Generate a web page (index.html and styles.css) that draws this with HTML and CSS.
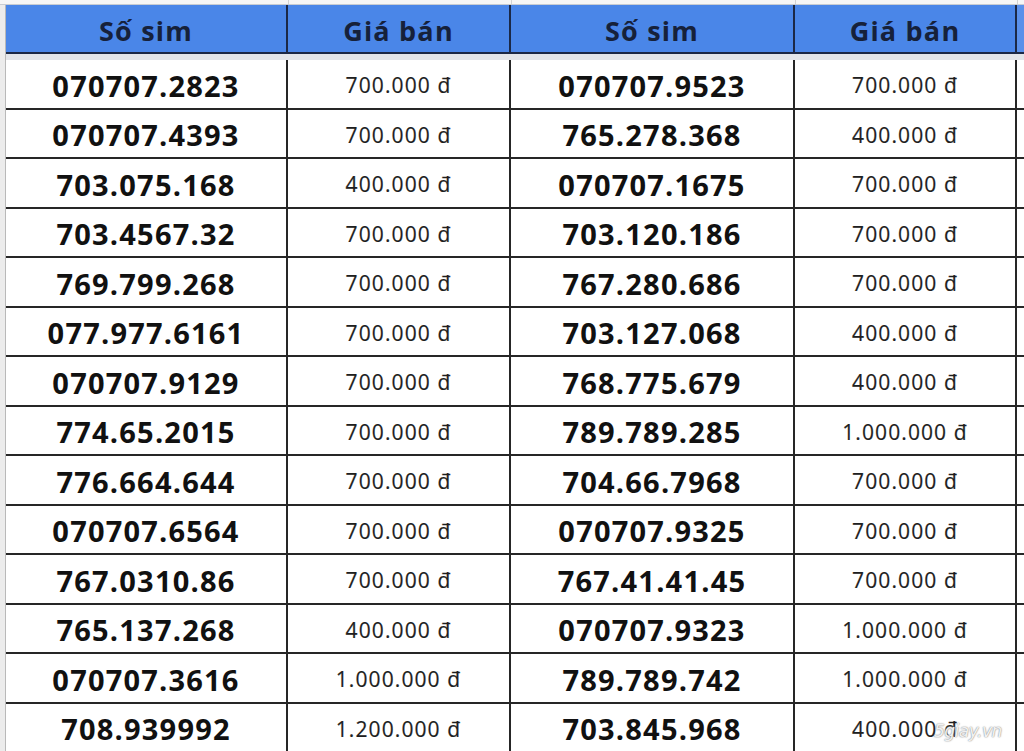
FILE: index.html
```html
<!DOCTYPE html>
<html lang="vi">
<head>
<meta charset="utf-8">
<title>Bảng giá sim</title>
<link rel="stylesheet" href="styles.css">
</head>
<body>
<div class="page">
  <div class="topbar">
    <div class="tcell tc1"></div><div class="tcell tc2"></div><div class="tcell tc3"></div><div class="tcell tc4"></div><div class="tcell tc5"></div>
  </div>
  <div class="main">
    <div class="gutter"></div>
    <div class="sheet">
      <div class="head">
        <div class="hcell">Số sim</div>
        <div class="hcell">Giá bán</div>
        <div class="hcell">Số sim</div>
        <div class="hcell">Giá bán</div>
        <div class="hcell last"></div>
      </div>
      <div class="band"></div>
      <div class="body">
        <div class="num">070707.2823</div><div class="price">700.000 đ</div><div class="num">070707.9523</div><div class="price">700.000 đ</div><div class="extra"></div>
        <div class="num">070707.4393</div><div class="price">700.000 đ</div><div class="num">765.278.368</div><div class="price">400.000 đ</div><div class="extra"></div>
        <div class="num">703.075.168</div><div class="price">400.000 đ</div><div class="num">070707.1675</div><div class="price">700.000 đ</div><div class="extra"></div>
        <div class="num">703.4567.32</div><div class="price">700.000 đ</div><div class="num">703.120.186</div><div class="price">700.000 đ</div><div class="extra"></div>
        <div class="num">769.799.268</div><div class="price">700.000 đ</div><div class="num">767.280.686</div><div class="price">700.000 đ</div><div class="extra"></div>
        <div class="num">077.977.6161</div><div class="price">700.000 đ</div><div class="num">703.127.068</div><div class="price">400.000 đ</div><div class="extra"></div>
        <div class="num">070707.9129</div><div class="price">700.000 đ</div><div class="num">768.775.679</div><div class="price">400.000 đ</div><div class="extra"></div>
        <div class="num">774.65.2015</div><div class="price">700.000 đ</div><div class="num">789.789.285</div><div class="price">1.000.000 đ</div><div class="extra"></div>
        <div class="num">776.664.644</div><div class="price">700.000 đ</div><div class="num">704.66.7968</div><div class="price">700.000 đ</div><div class="extra"></div>
        <div class="num">070707.6564</div><div class="price">700.000 đ</div><div class="num">070707.9325</div><div class="price">700.000 đ</div><div class="extra"></div>
        <div class="num">767.0310.86</div><div class="price">700.000 đ</div><div class="num">767.41.41.45</div><div class="price">700.000 đ</div><div class="extra"></div>
        <div class="num">765.137.268</div><div class="price">400.000 đ</div><div class="num">070707.9323</div><div class="price">1.000.000 đ</div><div class="extra"></div>
        <div class="num">070707.3616</div><div class="price">1.000.000 đ</div><div class="num">789.789.742</div><div class="price">1.000.000 đ</div><div class="extra"></div>
        <div class="num">708.939992</div><div class="price">1.200.000 đ</div><div class="num">703.845.968</div><div class="price">400.000 đ</div><div class="extra"></div>
      </div>
    </div>
  </div>
  <div class="watermark">5giay.vn</div>
</div>
</body>
</html>
```
FILE: styles.css
```css
* { box-sizing: border-box; }
html, body { margin: 0; padding: 0; }
body {
  width: 1024px;
  height: 751px;
  overflow: hidden;
  background: #ffffff;
  font-family: "Open Sans", "Noto Sans", sans-serif;
}
.page {
  position: relative;
  width: 1024px;
  height: 751px;
  overflow: hidden;
}
.topbar {
  display: grid;
  grid-template-columns: 289px 223px 284px 222px 1fr;
  height: 5px;
  background: #f6f6f6;
  border-bottom: 1px solid #c8ccd2;
}
.tcell { border-right: 1px solid #d2d2d2; }
.tc5 { border-right: none; }
.main {
  display: flex;
}
.gutter {
  width: 6px;
  flex: none;
  background: #ececec;
  border-right: 1px solid #b9b9b9;
}
.sheet {
  flex: 1;
}
.head {
  display: grid;
  grid-template-columns: 282px 223px 284px 222px 1fr;
  height: 49px;
  background: #4a86e8;
  border-bottom: 2px solid #1b2846;
}
.hcell {
  display: flex;
  align-items: center;
  justify-content: center;
  border-right: 2px solid #1b2846;
  color: #16213a;
  font-weight: 700;
  font-size: 27px;
  letter-spacing: 1.2px;
  padding-top: 4px;
}
.hcell.last { border-right: none; background: #5a90ea; }
.band {
  height: 6px;
  background: #e2e5ea;
}
.body {
  display: grid;
  grid-template-columns: 282px 223px 284px 222px 1fr;
  grid-auto-rows: 49.5px;
}
.num, .price, .extra {
  display: flex;
  align-items: center;
  justify-content: center;
  border-bottom: 2px solid #262626;
  border-right: 2px solid #262626;
  padding-top: 3px;
}
.extra { border-right: none; }
.num {
  color: #111111;
  font-weight: 700;
  font-size: 29px;
  letter-spacing: 1.2px;
}
.price {
  color: #1f1f1f;
  font-weight: 400;
  font-size: 21px;
  letter-spacing: 1.1px;
  -webkit-text-stroke: 0.2px #1f1f1f;
}
.watermark {
  position: absolute;
  left: 934px;
  top: 721px;
  font-family: "DejaVu Sans", sans-serif;
  font-style: italic;
  font-size: 17px;
  letter-spacing: -0.5px;
  color: rgba(255, 255, 255, 0.9);
  text-shadow: 0 0 1px #8a8a8a, 0 0 2px #a0a0a0;
}
```
